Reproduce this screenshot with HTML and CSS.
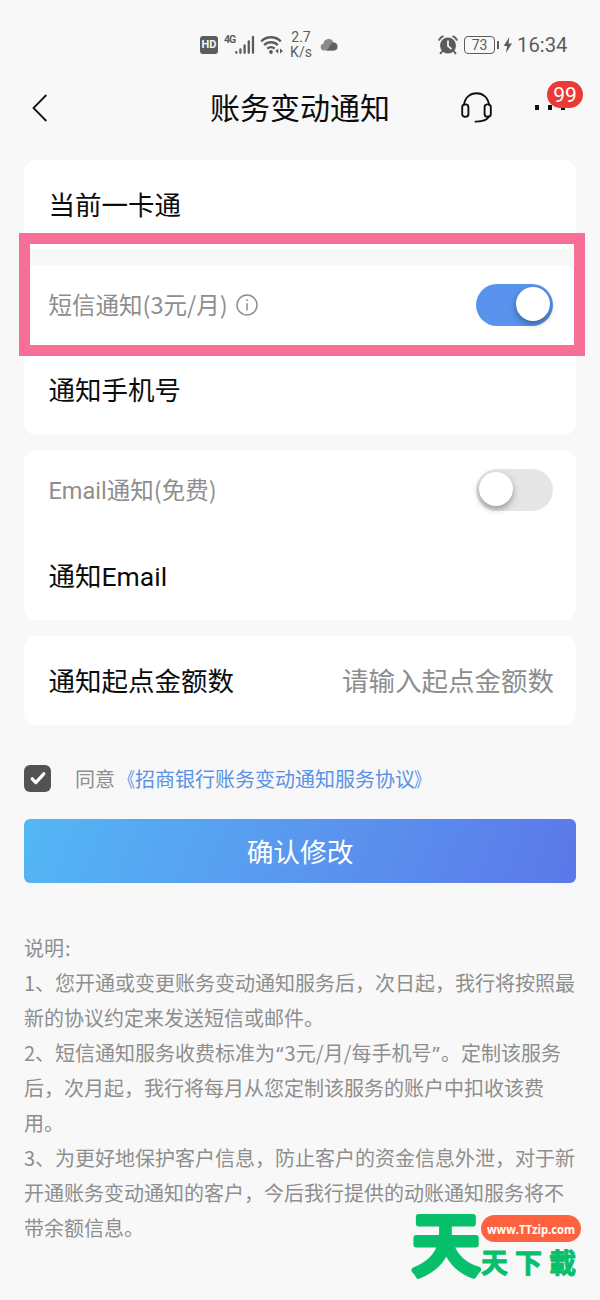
FILE: index.html
```
<!DOCTYPE html>
<html lang="zh-CN">

<head>
    <meta charset="UTF-8">
    <meta name="viewport" content="width=device-width, initial-scale=1.0">
    <title>账务变动通知</title>
    <link rel="stylesheet" href="styles.css">
</head>

<body>
    <div class="status-bar">
        <span class="hd">HD</span>
        <div class="signal">
            <span class="net">4G</span>
            <svg width="20" height="20" viewBox="0 0 20 20" stroke="#5c5c5c" stroke-width="2.3" stroke-linecap="round">
                <path d="M1.3 17.2v.6M5.4 14.4v3.4M9.6 10.5v7.3M13.8 6.3v11.5M18 2v15.8" />
            </svg>
        </div>
        <svg class="wifi" width="24" height="20" viewBox="0 0 24 20" fill="none" stroke="#5c5c5c" stroke-width="2.4">
            <path d="M1.2 6.3a14 14 0 0 1 19.6 0M4.2 10.1a9.7 9.7 0 0 1 13.6 0M7.3 13.7a5.4 5.4 0 0 1 7.4 0" />
            <circle cx="11" cy="17" r="1.9" fill="#5c5c5c" stroke="none" />
            <path d="M18.3 13.5v5l-3-2.5zM20 13.5v5l3-2.5z" fill="#5c5c5c" stroke="none" />
        </svg>
        <div class="speed">2.7<br>K/s</div>
        <svg class="cloud" width="18" height="14" viewBox="0 0 18 14">
            <path d="M4 12.5a3.6 3.6 0 0 1-.5-7.1 5.2 5.2 0 0 1 10-.9 4 4 0 0 1 .5 8z" fill="#8b8b8b" />
            <path d="M5.5 12.5c4 0 3.5-7.6 8-8a4.1 4.1 0 0 1 .5 8z" fill="#5f5f5f" />
        </svg>
        <svg class="alarm" width="20" height="20" viewBox="0 0 20 20" fill="none" stroke="#5c5c5c" stroke-linecap="round">
            <circle cx="10" cy="10.5" r="8" fill="#5c5c5c" stroke="none" />
            <path d="M1.2 4.8Q2.4 2.4 4.8 1.4M18.8 4.8Q17.6 2.4 15.2 1.4M4 16.5l-1.5 1.8M16 16.5l1.5 1.8" stroke-width="1.9" />
            <path d="M10 6v5l3 2.6" stroke="#f8f8f8" stroke-width="1.7" />
        </svg>
        <div class="battery">73</div>
        <svg class="bolt" width="10" height="16" viewBox="0 0 10 16">
            <path d="M6.3 0L.7 9h3.4L3 16l6-9.5H5.5z" fill="#5c5c5c" />
        </svg>
        <span class="time">16:34</span>
    </div>

    <header>
        <svg class="back" width="16" height="28" viewBox="0 0 16 28" fill="none" stroke="#111" stroke-width="1.8">
            <path d="M14.3 1L1.5 14l12.8 13" />
        </svg>
        <h1>账务变动通知</h1>
        <svg class="service" width="32" height="32" viewBox="0 0 32 32" fill="none" stroke="#111" stroke-width="1.9">
            <path d="M3 13.4C3.6 5.5 9 1.2 15.5 1.2S27.4 5.5 28 13.4" />
            <rect x="1.2" y="12.4" width="6.2" height="12.4" rx="2.8" />
            <rect x="23.6" y="12.4" width="6.2" height="12.4" rx="2.8" />
            <path d="M28 23.8c-1 3.4-5 6.1-14.3 5.8" />
        </svg>
        <div class="more">
            <i></i><i></i><i></i>
            <span class="badge">99</span>
        </div>
    </header>

    <main>
        <section class="card">
            <div class="row row-single">当前一卡通</div>
        </section>

        <section class="card">
            <div class="highlight"></div>
            <div class="row">
                <span class="sub">短信通知(3元/月)</span>
                <svg class="info" width="22" height="22" viewBox="0 0 22 22" fill="none" stroke="#8e8e8e" stroke-width="1.5">
                    <circle cx="11" cy="11" r="10" />
                    <path d="M11 9.2v7.2M11 5.2v1.8" />
                </svg>
                <span class="switch on"></span>
            </div>
            <div class="row row-second">通知手机号</div>
        </section>

        <section class="card">
            <div class="row">
                <span class="sub"><span class="latin">Email</span>通知(免费)</span>
                <span class="switch"></span>
            </div>
            <div class="row row-second">
                <span>通知<span class="latin">Email</span></span>
            </div>
        </section>

        <section class="card">
            <div class="row row-single">
                <span>通知起点金额数</span>
                <span class="placeholder">请输入起点金额数</span>
            </div>
        </section>

        <div class="agreement">
            <span class="checkbox">
                <svg width="27" height="27" viewBox="0 0 27 27" fill="none" stroke="#fff" stroke-width="3.2" stroke-linecap="round" stroke-linejoin="round">
                    <path d="M8.2 13.8l3.6 3.8 8-8.8" />
                </svg>
            </span>
            <span>同意</span><a><span class="bracket open">《</span>招商银行账务变动通知服务协议<span class="bracket">》</span></a>
        </div>

        <button type="button">确认修改</button>

        <div class="notes">
            <p>说明<span class="colon">:</span></p>
            <p>1、您开通或变更账务变动通知服务后，次日起，我行将按照最<br>新的协议约定来发送短信或邮件。</p>
            <p>2、短信通知服务收费标准为<span class="quote">“</span>3元/月/每手机号<span class="quote">”</span>。定制该服务<br>后，次月起，我行将每月从您定制该服务的账户中扣收该费<br>用。</p>
            <p>3、为更好地保护客户信息，防止客户的资金信息外泄，对于新<br>开通账务变动通知的客户，今后我行提供的动账通知服务将不<br>带余额信息。</p>
        </div>
    </main>

    <svg class="watermark" width="172" height="76" viewBox="0 0 172 76">
        <text class="mark-big" x="2" y="62.5">天</text>
        <rect x="71" y="8" width="100" height="27" rx="13.5" fill="#ff623e" />
        <text class="mark-url" x="121" y="26.5" text-anchor="middle" textLength="88" lengthAdjust="spacingAndGlyphs">www.TTzip.com</text>
        <text class="mark-name" x="71 105 139" y="66">天下載</text>
    </svg>
</body>

</html>
```
FILE: styles.css
```
* {
    box-sizing: border-box;
}

body {
    position: relative;
    width: 600px;
    height: 1300px;
    margin: 0;
    overflow: hidden;
    background-color: #f8f8f8;
    color: #0c0c0c;
    font-family: 'Noto Sans CJK SC', sans-serif;
    font-size: 26.5px;
}

svg {
    display: block;
    flex: none;
}

.status-bar {
    display: flex;
    align-items: center;
    height: 76px;
    padding: 14px 33px 0 200px;
    color: #5c5c5c;
}

.hd {
    width: 18px;
    height: 18px;
    border-radius: 3px;
    background-color: #5c5c5c;
    color: #f8f8f8;
    font: bold 11px/18px Roboto, sans-serif;
    text-align: center;
}

.signal {
    display: flex;
    align-items: flex-start;
    margin-left: 6px;
}

.net {
    width: 11px;
    font: bold 10.5px/10px Roboto, sans-serif;
    letter-spacing: -1px;
}

.wifi {
    margin-left: 5px;
}

.speed {
    width: 24px;
    margin-left: 5px;
    font: 14px/15px Roboto, sans-serif;
    text-align: center;
    white-space: nowrap;
}

.cloud {
    margin-left: 7px;
}

.alarm {
    margin-left: auto;
}

.battery {
    position: relative;
    width: 31px;
    height: 18px;
    margin-left: 6px;
    border: 1.5px solid #5c5c5c;
    border-radius: 4px;
    font: 14px/16px Roboto, sans-serif;
    text-align: center;
}

.battery::after {
    content: "";
    position: absolute;
    top: 4px;
    right: -5px;
    width: 2px;
    height: 8px;
    background-color: #5c5c5c;
}

.bolt {
    margin-left: 8px;
}

.time {
    width: 50px;
    margin-left: 4px;
    font: 20.3px/24px Roboto, sans-serif;
    white-space: nowrap;
}

header {
    display: flex;
    align-items: center;
    height: 63px;
    padding: 0 33px 0 32px;
}

h1 {
    margin: -3px 0 0 162px;
    font-size: 30px;
    font-weight: 400;
    line-height: 44px;
}

.service {
    margin-left: 71px;
}

.more {
    position: relative;
    display: flex;
    gap: 9px;
    margin-left: 42px;
}

.more i {
    width: 4px;
    height: 5px;
    background-color: #111;
}

.badge {
    position: absolute;
    left: 12px;
    bottom: 2px;
    width: 36px;
    height: 27px;
    border-radius: 13.5px;
    background-color: #ea3a35;
    color: #fff;
    font: 21px/28px Roboto, sans-serif;
    text-align: center;
}

main {
    padding: 21px 24px 0;
}

.card {
    position: relative;
    margin-bottom: 15.7px;
    border-radius: 12px;
    background-color: #fff;
}

.row {
    display: flex;
    align-items: center;
    height: 80px;
    padding: 0 23px 2px 24.5px;
}

.row-single {
    height: 89.3px;
}

.row-second {
    height: 89.7px;
}

.sub {
    color: #8e8e8e;
    font-size: 23.5px;
}

.latin {
    font-family: Roboto, sans-serif;
    line-height: 1;
}

.info {
    margin-top: 2px;
    margin-left: 8px;
}

.switch {
    position: relative;
    width: 77px;
    height: 42px;
    margin-top: 2px;
    margin-left: auto;
    border-radius: 21px;
    background-color: #e5e5e5;
}

.switch::after {
    content: "";
    position: absolute;
    top: 3px;
    left: 3px;
    width: 34px;
    height: 34px;
    border-radius: 50%;
    background-color: #fff;
    box-shadow: 0 3px 6px rgba(0, 0, 0, 0.35);
}

.switch.on {
    background-color: #5893ed;
}

.switch.on::after {
    left: 40px;
}

.highlight {
    position: absolute;
    z-index: 1;
    top: -32px;
    left: -5px;
    width: 566px;
    height: 123px;
    border: 11px solid #f76f97;
}

.placeholder {
    margin-left: auto;
    margin-right: -1px;
    color: #8e8e8e;
}

.agreement {
    display: flex;
    align-items: center;
    height: 30px;
    margin-top: 38px;
    color: #8e8e8e;
    font-size: 20px;
}

.agreement a {
    color: #5a92e6;
}

.bracket {
    display: inline-block;
    transform: scaleX(0.8);
    transform-origin: left;
}

.bracket:last-child {
    margin-left: -1px;
}

.bracket.open {
    transform-origin: right;
}

.checkbox {
    width: 27px;
    height: 27px;
    margin-right: 24px;
    border-radius: 6px;
    background-color: #525354;
}

button {
    display: block;
    width: 552px;
    height: 64px;
    margin-top: 26px;
    padding: 0 0 2px;
    border: none;
    border-radius: 6px;
    background: linear-gradient(110deg, #53b7f5, #5a94ee 55%, #5b78e9);
    color: #fff;
    font-family: inherit;
    font-size: 26.7px;
}

.notes {
    margin-top: 47px;
    color: #8e8e8e;
    font-size: 20px;
    line-height: 35px;
    white-space: nowrap;
}

.notes p {
    margin: 0;
}

.colon {
    margin-left: 1px;
}

.quote {
    display: inline-block;
    width: 9.5px;
    font-family: 'Noto Sans', sans-serif;
    line-height: 1;
    text-align: center;
}

/* site logo over the page */
.watermark {
    position: absolute;
    top: 1207px;
    left: 410px;
    overflow: visible;
    fill: #08bf6c;
    stroke-linejoin: round;
}

.mark-big {
    font-size: 68px;
    font-weight: 500;
    stroke: #08bf6c;
    stroke-width: 6px;
}

.mark-url {
    fill: #fff;
    font: bold 12.5px 'Open Sans', sans-serif;
}

.mark-name {
    font-size: 27px;
    font-weight: 700;
    stroke: #08bf6c;
    stroke-width: 1px;
}
```
